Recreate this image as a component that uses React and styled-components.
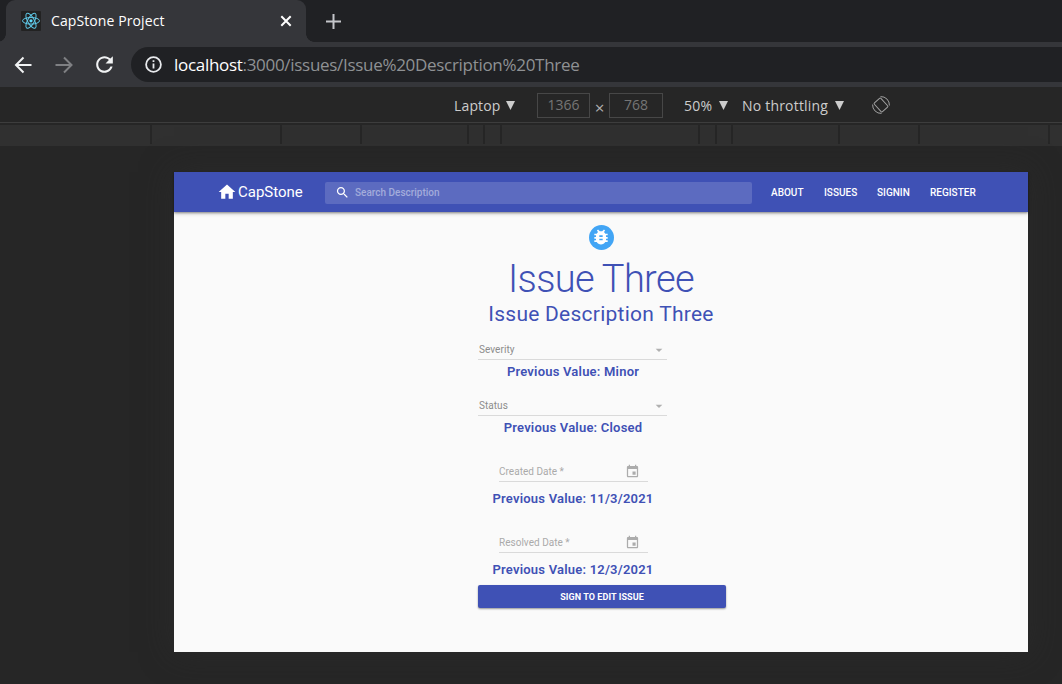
import React from "react";
import styled, { createGlobalStyle } from "styled-components";

const GlobalStyle = createGlobalStyle`
  *, *::before, *::after { box-sizing: border-box; }
  html, body { margin: 0; padding: 0; overflow: hidden; background: #262626; }
  h1, h2, p { margin: 0; }
  button { border: 0; padding: 0; background: none; font: inherit; color: inherit; }
  svg { display: block; flex: none; }
`;

const uiFont = `"Open Sans", "Noto Sans", sans-serif`;

const Window = styled.div`
  display: flex;
  flex-direction: column;
  width: 1062px;
  height: 684px;
  overflow: hidden;
  background: #262626;
  font-family: ${uiFont};
`;

const Label = styled.span`
  flex: none;
  white-space: nowrap;
  font-size: ${(p) => p.$size}px;
  letter-spacing: ${(p) => p.$spacing || 0}px;
  line-height: 20px;
  color: ${(p) => p.$color || "#fff"};
`;

/* Browser chrome */
const TabStrip = styled.div`
  display: flex;
  height: 42px;
  flex: none;
  padding-left: 6px;
  background: #202124;
`;

const Tab = styled.div`
  position: relative;
  display: flex;
  align-items: center;
  width: 300px;
  height: 42px;
  padding: 0 13px 0 15px;
  border-radius: 9px 9px 0 0;
  background: #35363a;

  &::before,
  &::after {
    content: "";
    position: absolute;
    bottom: 0;
    width: 8px;
    height: 8px;
  }
  &::before {
    left: -8px;
    background: radial-gradient(circle at 0 0, #202124 7.5px, #35363a 8px);
  }
  &::after {
    right: -8px;
    background: radial-gradient(circle at 100% 0, #202124 7.5px, #35363a 8px);
  }
`;

const TabTitle = styled(Label)`
  flex: 1;
  margin-left: 10px;
`;

const NewTab = styled.button`
  display: flex;
  align-items: center;
  margin-left: 20px;
`;

const NavBar = styled.div`
  display: flex;
  align-items: center;
  flex: none;
  height: 45px;
  padding-left: 14px;
  background: #35363a;
`;

const NavButton = styled.button`
  display: flex;
  justify-content: center;
  width: 20px;
  margin-right: ${(p) => p.$gap}px;
`;

const AddressBar = styled.div`
  display: flex;
  align-items: center;
  flex: 1;
  height: 35px;
  padding-left: 14px;
  border-radius: 18px 0 0 18px;
  background: #202124;
`;

const Url = styled(Label)`
  margin-left: 12px;
  b { font-weight: 400; color: #fff; }
`;

/* Device toolbar */
const DeviceBar = styled.div`
  display: flex;
  align-items: center;
  flex: none;
  height: 36px;
  padding: 1px 0 0 454px;
  border-bottom: 1px solid #3d3d3d;
`;

const Dropdown = styled.div`
  display: flex;
  align-items: center;
  justify-content: space-between;
  width: ${(p) => p.$width}px;
  margin-right: ${(p) => p.$gap}px;
`;

const DropdownText = styled(Label)`
  padding-top: 1px;
`;

const SizeBox = styled.div`
  display: flex;
  align-items: center;
  justify-content: center;
  width: ${(p) => p.$width}px;
  height: 25px;
  margin-right: ${(p) => p.$gap || 0}px;
  border: 1px solid #474747;
`;

const Times = styled(Label)`
  width: 19px;
  padding-top: 5px;
  text-align: center;
`;

const Ruler = styled.div`
  display: flex;
  gap: 2px;
  flex: none;
  height: 21px;
  margin-top: 2px;
  border-bottom: 2px solid #303030;
`;

const RulerSegment = styled.div`
  flex: none;
  width: ${(p) => p.$width}px;
  background: #303030;
`;

/* Emulated page */
const Viewport = styled.main`
  display: flex;
  flex-direction: column;
  align-items: center;
  flex: none;
  width: 854px;
  height: 480px;
  margin: 26px 0 0 174px;
  background: #fafafa;
  box-shadow: 0 0 30px rgba(45, 45, 45, 0.6);
  font-family: Roboto, sans-serif;
`;

const AppBar = styled.header`
  display: flex;
  align-items: center;
  width: 100%;
  height: 40px;
  flex: none;
  padding-left: 43px;
  background: #3f51b5;
  box-shadow: 0 1px 2px rgba(0, 0, 0, 0.35), 0 2px 4px rgba(0, 0, 0, 0.16);
`;

const Brand = styled.div`
  display: flex;
  align-items: center;
  width: 108px;
`;

const BrandName = styled(Label)`
  margin-left: 1px;
  font-weight: 450;
`;

const Search = styled.div`
  display: flex;
  align-items: center;
  width: 426.5px;
  height: 22px;
  margin: 1px 19.5px 0 0;
  padding-left: 10px;
  border-radius: 2px;
  background: #5c6bc0;
`;

const Placeholder = styled(Label)`
  margin-left: 5px;
  font-weight: 500;
`;

const NavLink = styled(Label)`
  width: ${(p) => p.$width}px;
  padding-top: 1px;
  font-weight: 500;
`;

const Avatar = styled.div`
  display: flex;
  align-items: center;
  justify-content: center;
  flex: none;
  width: 25px;
  height: 25px;
  margin: 12.5px 0 0.5px;
  border-radius: 50%;
  background: #42a5f5;
`;

const Title = styled.h1`
  height: 46px;
  margin-top: 6px;
  font-weight: 300;
  font-size: 38px;
  line-height: 46px;
  letter-spacing: -0.65px;
  color: #3f51b5;
`;

const Subtitle = styled.h2`
  height: 26px;
  margin-top: -1px;
  font-weight: 400;
  font-size: 21px;
  line-height: 26px;
  letter-spacing: 0.25px;
  color: #3f51b5;
`;

const Form = styled.div`
  display: flex;
  flex-direction: column;
  align-items: flex-start;
  width: 248px;
  margin: 13px 0 0 2px;
`;

const Group = styled.div`
  display: flex;
  flex-direction: column;
  align-items: center;
  width: 189px;
  height: ${(p) => p.$height}px;
  padding-top: ${(p) => p.$top || 0}px;
`;

const Field = styled.div`
  display: flex;
  align-items: center;
  justify-content: space-between;
  flex: none;
  width: ${(p) => p.$width}px;
  height: 20px;
  padding: 0 ${(p) => p.$end}px 0 ${(p) => p.$start}px;
  margin: 0 0 ${(p) => p.$gap}px ${(p) => p.$indent || 0}px;
  border-bottom: 1px solid #dadada;
`;

const Previous = styled.p`
  padding-left: 1px;
  font-weight: 600;
  font-size: 13px;
  line-height: 16px;
  letter-spacing: 0.21px;
  white-space: nowrap;
  color: #3f51b5;
`;

const SubmitButton = styled.button`
  width: 248px;
  height: 23px;
  border-radius: 2px;
  background: #3f51b5;
  color: #fff;
  font-weight: 700;
  font-size: 9px;
  line-height: 24px;
  letter-spacing: 0.08px;
  text-align: center;
  box-shadow: 0 1px 2px rgba(0, 0, 0, 0.4);
`;

const ReactLogo = () => (
  <svg width="20" height="20" viewBox="0 0 20 20" fill="none" stroke="#5fc9e8" strokeWidth="1">
    <rect width="20" height="20" rx="1" fill="#222" stroke="none" />
    <circle cx="10" cy="9.8" r="1.6" fill="#61dafb" stroke="none" />
    <ellipse cx="10" cy="9.8" rx="8.5" ry="3.3" />
    <ellipse cx="10" cy="9.8" rx="8.5" ry="3.3" transform="rotate(60 10 9.8)" />
    <ellipse cx="10" cy="9.8" rx="8.5" ry="3.3" transform="rotate(120 10 9.8)" />
  </svg>
);

const Arrow = ({ color, flip }) => (
  <svg width="20" height="20" viewBox="0 0 20 20" fill="none" stroke={color} strokeWidth="2">
    <path d={flip ? "M1.5 10H17M10 2.5l7.5 7.5-7.5 7.5" : "M17.5 10H2M9.500 2.5L2 10l7.5 7.5"} />
  </svg>
);

const Icon = ({ d, size, color = "#fff" }) => (
  <svg width={size} height={size} viewBox="0 0 24 24" fill={color}>
    <path d={d} />
  </svg>
);

const Triangle = () => (
  <svg width="9" height="9" viewBox="0 0 9 9" fill="#ccc">
    <path d="M0 0h9L4.5 9z" />
  </svg>
);

const RotateIcon = () => (
  <svg width="18" height="18" viewBox="0 0 18 18" fill="none" stroke="#a0a0a0" strokeWidth="1">
    <rect x="3" y="4.6" width="12" height="8.800" rx="1" transform="rotate(48 9 9)" />
    <path d="M8.500 .6A8.400 8.400 0 0 1 17.400 9.500M9.500 17.400A8.400 8.400 0 0 1 .6 8.500" />
  </svg>
);

const icons = {
  refresh:
    "M17.65 6.35C16.2 4.9 14.21 4 12 4c-4.42 0-7.99 3.58-7.99 8s3.57 8 7.99 8c3.73 0 6.84-2.55 7.73-6h-2.08c-.82 2.33-3.04 4-5.65 4-3.31 0-6-2.69-6-6s2.69-6 6-6c1.66 0 3.14.69 4.22 1.78L13 11h7V4l-2.35 2.35z",
  home: "M10 20v-6h4v6h5v-8h3L12 3 2 12h3v8z",
  search:
    "M15.5 14h-.79l-.28-.27C15.41 12.59 16 11.11 16 9.5 16 5.91 13.09 3 9.5 3S3 5.91 3 9.5 5.91 16 9.5 16c1.61 0 3.09-.59 4.23-1.57l.27.28v.79l5 4.99L20.49 19l-4.99-5zm-6 0C7.01 14 5 11.99 5 9.5S7.01 5 9.5 5 14 7.01 14 9.5 11.99 14 9.5 14z",
  bug: "M20 8h-2.81c-.45-.78-1.07-1.45-1.82-1.96L17 4.41 15.59 3l-2.17 2.17C12.96 5.06 12.49 5 12 5c-.49 0-.96.06-1.41.17L8.41 3 7 4.41l1.62 1.63C7.88 6.55 7.26 7.22 6.81 8H4v2h2.09c-.05.33-.09.66-.09 1v1H4v2h2v1c0 .34.04.67.09 1H4v2h2.81c1.04 1.79 2.97 3 5.19 3s4.15-1.21 5.19-3H20v-2h-2.09c.05-.33.09-.66.09-1v-1h2v-2h-2v-1c0-.34-.04-.67-.09-1H20V8zm-6 8h-4v-2h4v2zm0-4h-4v-2h4v2z",
  caret: "M7 10l5 5 5-5z",
  event:
    "M17 12h-5v5h5v-5zM16 1v2H8V1H6v2H5c-1.11 0-1.99.9-1.99 2L3 19c0 1.1.89 2 2 2h14c1.1 0 2-.9 2-2V5c0-1.1-.9-2-2-2h-1V1h-2zm3 18H5V8h14v11z",
};

const rulerSegments = [150, 128, 78, 105, 14, 15, 196, 15, 14, 105, 78, 128, 12];

const SelectGroup = ({ label, value }) => (
  <Group $height={56}>
    <Field $width={189} $start={1} $end={0} $gap={4}>
      <Label $size={10} $spacing={0.05} $color="#8c8c8c">{label}</Label>
      <Icon d={icons.caret} size={16} color="#b0b0b0" />
    </Field>
    <Previous>Previous Value: {value}</Previous>
  </Group>
);

const DateGroup = ({ label, value, height }) => (
  <Group $height={height} $top={10}>
    <Field $width={149} $start={0} $end={8} $gap={9} $indent={2}>
      <Label $size={10} $spacing={0.02} $color="#aaa">{label}</Label>
      <Icon d={icons.event} size={15} color="#acacac" />
    </Field>
    <Previous>Previous Value: {value}</Previous>
  </Group>
);

export default function App() {
  return (
    <Window>
      <GlobalStyle />
      <TabStrip>
        <Tab>
          <ReactLogo />
          <TabTitle $size={14} $spacing={0.1}>CapStone Project</TabTitle>
          <svg width="14" height="14" viewBox="0 0 14 14" stroke="#fff" strokeWidth="2">
            <path d="M2.300 2.300l9.400 9.400M11.700 2.300l-9.400 9.400" />
          </svg>
        </Tab>
        <NewTab>
          <svg width="15" height="15" viewBox="0 0 15 15" stroke="#c4c6ca" strokeWidth="2">
            <path d="M7.500 0v15M0 7.500h15" />
          </svg>
        </NewTab>
      </TabStrip>
      <NavBar>
        <NavButton $gap={20}><Arrow color="#f1f3f4" /></NavButton>
        <NavButton $gap={20}><Arrow color="#7f8083" flip /></NavButton>
        <NavButton $gap={17}><Icon d={icons.refresh} size={25} color="#f1f3f4" /></NavButton>
        <AddressBar>
          <svg width="17" height="17" viewBox="0 0 17 17" fill="none" stroke="#e8eaed" strokeWidth="1.800">
            <circle cx="8.500" cy="8.500" r="7.400" />
            <path d="M8.500 4.200v1.900M8.500 7.500v5" />
          </svg>
          <Url $size={17} $spacing={-0.3} $color="#8f9194">
            <b>localhost</b>:3000/issues/Issue%20Description%20Three
          </Url>
        </AddressBar>
      </NavBar>
      <DeviceBar>
        <Dropdown $width={61} $gap={22}>
          <DropdownText $size={14} $spacing={0.15} $color="#ccc">Laptop</DropdownText>
          <Triangle />
        </Dropdown>
        <SizeBox $width={53}><Label $size={14} $color="#757575">1366</Label></SizeBox>
        <Times $size={17} $color="#b0b0b0">×</Times>
        <SizeBox $width={54} $gap={21}><Label $size={14} $color="#757575">768</Label></SizeBox>
        <Dropdown $width={44} $gap={14}>
          <DropdownText $size={14} $spacing={0.2} $color="#ccc">50%</DropdownText>
          <Triangle />
        </Dropdown>
        <Dropdown $width={102} $gap={28}>
          <DropdownText $size={14} $spacing={0.2} $color="#ccc">No throttling</DropdownText>
          <Triangle />
        </Dropdown>
        <RotateIcon />
      </DeviceBar>
      <Ruler>
        {rulerSegments.map((width, i) => <RulerSegment key={i} $width={width} />)}
      </Ruler>
      <Viewport>
        <AppBar>
          <Brand>
            <Icon d={icons.home} size={20} />
            <BrandName $size={15}>CapStone</BrandName>
          </Brand>
          <Search>
            <Icon d={icons.search} size={15} />
            <Placeholder $size={10} $color="#a3acdb">Search Description</Placeholder>
          </Search>
          <NavLink $size={10} $width={53}>ABOUT</NavLink>
          <NavLink $size={10} $width={53}>ISSUES</NavLink>
          <NavLink $size={10} $width={53}>SIGNIN</NavLink>
          <NavLink $size={10} $width={53}>REGISTER</NavLink>
        </AppBar>
        <Avatar><Icon d={icons.bug} size={20} /></Avatar>
        <Title>Issue Three</Title>
        <Subtitle>Issue Description Three</Subtitle>
        <Form>
          <SelectGroup label="Severity" value="Minor" />
          <SelectGroup label="Status" value="Closed" />
          <DateGroup label="Created Date *" value="11/3/2021" height={71} />
          <DateGroup label="Resolved Date *" value="12/3/2021" height={62} />
          <SubmitButton>SIGN TO EDIT ISSUE</SubmitButton>
        </Form>
      </Viewport>
    </Window>
  );
}
